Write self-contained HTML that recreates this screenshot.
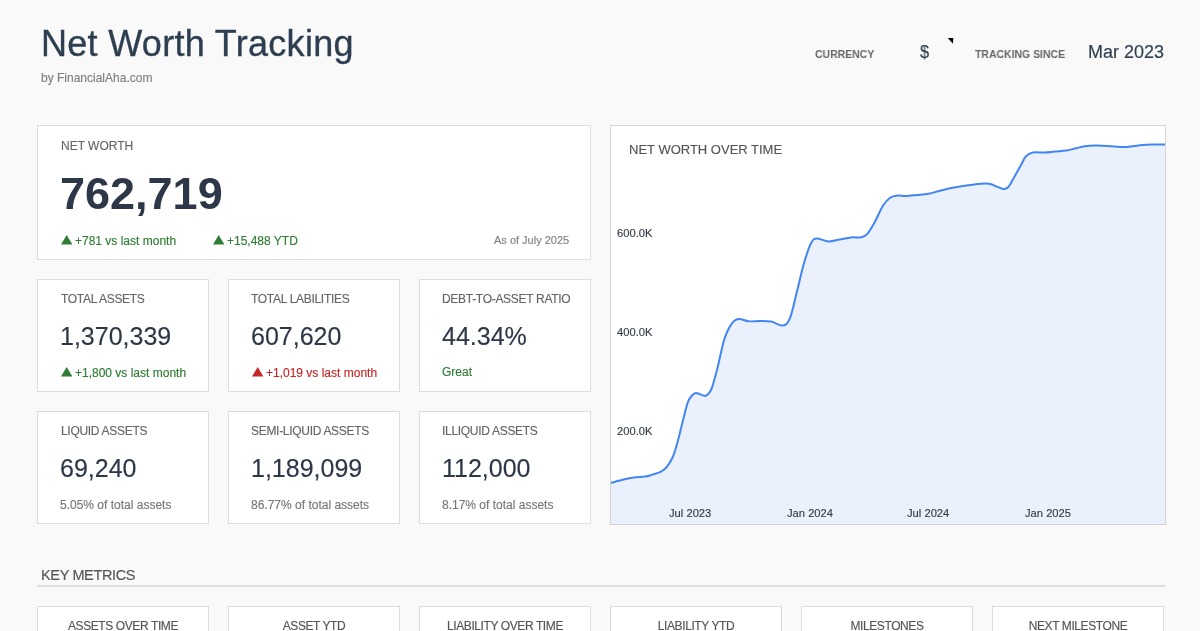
<!DOCTYPE html>
<html><head><meta charset="utf-8">
<style>
*{box-sizing:border-box;margin:0;padding:0}
html,body{width:1200px;height:631px;overflow:hidden;background:#f9f9f9;font-family:"Liberation Sans",sans-serif}
.a{position:absolute;white-space:nowrap;will-change:transform;-webkit-text-stroke:0.15px currentColor}
.card{position:absolute;background:#fff;border:1px solid #dddddd}
.lbl{color:#666;font-size:12px;letter-spacing:-0.3px}
.big{color:#2d3748;font-size:25px}
.up{color:#2e7d32;font-size:12px}
.dn{color:#c62828;font-size:12px}
.sub{color:#777;font-size:12px}
.ax{font-size:11.2px;color:#333c48}
.km{will-change:transform;-webkit-text-stroke:0.15px currentColor;position:absolute;top:605.5px;width:172px;height:40px;background:#fff;border:1px solid #dddddd;text-align:center;color:#555;font-size:12px;letter-spacing:-0.4px;padding-top:12px}
</style></head><body>
<div class="a" style="left:41px;top:22.5px;font-size:36px;letter-spacing:0.3px;-webkit-text-stroke:0.35px currentColor;color:#2c3e50">Net Worth Tracking</div>
<div class="a" style="left:41px;top:71px;font-size:12px;color:#808080">by FinancialAha.com</div>

<div class="a" style="left:815px;top:47.8px;font-size:11.2px;font-weight:bold;-webkit-text-stroke:0;transform:scaleX(0.934);transform-origin:0 0;color:#666">CURRENCY</div>
<div class="a" style="left:920px;top:41px;font-size:18.5px;transform:scaleX(0.88);transform-origin:0 0;color:#2c3e50">$</div>
<svg class="a" style="left:947px;top:38px" width="7" height="6"><path d="M0.7 0.1 L6.3 0.1 L6 5.7 Z" fill="#000"/></svg>
<div class="a" style="left:975px;top:47.8px;font-size:11.2px;font-weight:bold;-webkit-text-stroke:0;transform:scaleX(0.934);transform-origin:0 0;color:#666">TRACKING SINCE</div>
<div class="a" style="left:1088px;top:42px;font-size:18px;color:#2c3e50">Mar 2023</div>

<!-- net worth card -->
<div class="card" style="left:37px;top:125px;width:554px;height:135px"></div>
<div class="a lbl" style="left:61px;top:139px;letter-spacing:0">NET WORTH</div>
<div class="a" style="left:60px;top:168px;font-size:45px;font-weight:bold;-webkit-text-stroke:0;color:#2d3748">762,719</div>
<svg class="a" style="left:60.7px;top:235.3px" width="12" height="10"><path d="M0 9.4L5.7 0L11.4 9.4Z" fill="#2e7d32"/></svg><div class="a up" style="left:75px;top:234px">+781 vs last month</div>
<svg class="a" style="left:212.8px;top:235.3px" width="12" height="10"><path d="M0 9.4L5.7 0L11.4 9.4Z" fill="#2e7d32"/></svg><div class="a up" style="left:227px;top:234px">+15,488 YTD</div>
<div class="a sub" style="left:494px;top:234px;font-size:11px;color:#808080">As of July 2025</div>

<!-- row 1 -->
<div class="card" style="left:37px;top:279px;width:172px;height:113px"></div>
<div class="a lbl" style="left:61px;top:292px">TOTAL ASSETS</div>
<div class="a big" style="left:60px;top:322px">1,370,339</div>
<svg class="a" style="left:60.8px;top:367.2px" width="12" height="10"><path d="M0 9.4L5.7 0L11.4 9.4Z" fill="#2e7d32"/></svg><div class="a up" style="left:75px;top:366px">+1,800 vs last month</div>

<div class="card" style="left:228px;top:279px;width:172px;height:113px"></div>
<div class="a lbl" style="left:251px;top:292px">TOTAL LABILITIES</div>
<div class="a big" style="left:251px;top:322px">607,620</div>
<svg class="a" style="left:251.8px;top:367.2px" width="12" height="10"><path d="M0 9.4L5.7 0L11.4 9.4Z" fill="#c62828"/></svg><div class="a dn" style="left:266px;top:366px">+1,019 vs last month</div>

<div class="card" style="left:419px;top:279px;width:172px;height:113px"></div>
<div class="a lbl" style="left:442px;top:292px">DEBT-TO-ASSET RATIO</div>
<div class="a big" style="left:442px;top:322px">44.34%</div>
<div class="a up" style="left:442px;top:365px">Great</div>

<!-- row 2 -->
<div class="card" style="left:37px;top:411px;width:172px;height:113px"></div>
<div class="a lbl" style="left:61px;top:424px">LIQUID ASSETS</div>
<div class="a big" style="left:60px;top:454px">69,240</div>
<div class="a sub" style="left:60px;top:498px">5.05% of total assets</div>

<div class="card" style="left:228px;top:411px;width:172px;height:113px"></div>
<div class="a lbl" style="left:251px;top:424px">SEMI-LIQUID ASSETS</div>
<div class="a big" style="left:251px;top:454px">1,189,099</div>
<div class="a sub" style="left:251px;top:498px">86.77% of total assets</div>

<div class="card" style="left:419px;top:411px;width:172px;height:113px"></div>
<div class="a lbl" style="left:442px;top:424px">ILLIQUID ASSETS</div>
<div class="a big" style="left:442px;top:454px">112,000</div>
<div class="a sub" style="left:442px;top:498px">8.17% of total assets</div>

<!-- chart -->
<div class="card" style="left:610px;top:125px;width:556px;height:400px;border-color:#d4d4d4;overflow:hidden">
<svg id="chart" width="556" height="400" style="position:absolute;left:-1px;top:-1px">
<path id="fill" fill="#eaf1fd" d="M-5.00 359.46 C-3.97 359.19 -1.88 358.63 1.20 357.80 C4.28 356.97 9.73 355.38 13.50 354.50 C17.27 353.62 20.20 352.98 23.80 352.50 C27.40 352.02 32.00 352.08 35.10 351.60 C38.20 351.12 39.82 350.38 42.40 349.60 C44.98 348.82 48.20 348.20 50.60 346.90 C53.00 345.60 54.73 344.37 56.80 341.80 C58.87 339.23 61.12 335.97 63.00 331.50 C64.88 327.03 66.40 321.18 68.10 315.00 C69.80 308.82 71.48 300.92 73.20 294.40 C74.92 287.88 76.50 280.25 78.40 275.90 C80.30 271.55 82.72 269.43 84.60 268.30 C86.48 267.17 87.88 268.68 89.70 269.10 C91.52 269.52 93.58 271.57 95.50 270.80 C97.42 270.03 99.27 268.88 101.20 264.50 C103.13 260.12 104.93 252.78 107.10 244.50 C109.27 236.22 111.82 222.37 114.20 214.80 C116.58 207.23 119.02 202.57 121.40 199.10 C123.78 195.63 125.65 194.47 128.50 194.00 C131.35 193.53 134.93 195.97 138.50 196.30 C142.07 196.63 146.10 195.95 149.90 196.00 C153.70 196.05 157.50 195.85 161.30 196.60 C165.10 197.35 169.60 201.03 172.70 200.50 C175.80 199.97 177.52 199.10 179.90 193.40 C182.28 187.70 184.63 175.57 187.00 166.30 C189.37 157.03 191.72 145.88 194.10 137.80 C196.48 129.72 199.15 121.85 201.30 117.80 C203.45 113.75 204.15 113.73 207.00 113.50 C209.85 113.27 214.60 116.25 218.40 116.40 C222.20 116.55 226.00 115.07 229.80 114.40 C233.60 113.73 237.58 112.77 241.20 112.40 C244.82 112.03 248.77 112.83 251.50 112.20 C254.23 111.57 255.32 111.27 257.60 108.60 C259.88 105.93 262.67 100.80 265.20 96.20 C267.73 91.60 270.27 84.95 272.80 81.00 C275.33 77.05 277.87 74.23 280.40 72.50 C282.93 70.77 285.47 70.83 288.00 70.60 C290.53 70.37 292.43 71.20 295.60 71.10 C298.77 71.00 303.20 70.40 307.00 70.00 C310.80 69.60 314.60 69.40 318.40 68.70 C322.20 68.00 326.00 66.75 329.80 65.80 C333.60 64.85 337.40 63.78 341.20 63.00 C345.00 62.22 348.80 61.67 352.60 61.10 C356.40 60.53 360.18 60.02 364.00 59.60 C367.82 59.18 372.63 58.67 375.50 58.60 C378.37 58.53 379.30 58.70 381.20 59.20 C383.10 59.70 384.85 60.82 386.90 61.60 C388.95 62.38 391.60 63.83 393.50 63.90 C395.40 63.97 396.55 63.90 398.30 62.00 C400.05 60.10 401.88 56.17 404.00 52.50 C406.12 48.83 409.00 43.53 411.00 40.00 C413.00 36.47 414.05 33.37 416.00 31.30 C417.95 29.23 419.53 28.23 422.70 27.60 C425.87 26.97 431.28 27.68 435.00 27.50 C438.72 27.32 441.45 26.82 445.00 26.50 C448.55 26.18 452.97 26.10 456.30 25.60 C459.63 25.10 461.88 24.22 465.00 23.50 C468.12 22.78 471.67 21.78 475.00 21.30 C478.33 20.82 481.25 20.67 485.00 20.60 C488.75 20.53 494.17 20.73 497.50 20.90 C500.83 21.07 502.28 21.40 505.00 21.60 C507.72 21.80 510.88 22.15 513.80 22.10 C516.72 22.05 519.38 21.65 522.50 21.30 C525.62 20.95 529.17 20.30 532.50 20.00 C535.83 19.70 538.58 19.58 542.50 19.50 C546.42 19.42 553.75 19.50 556.00 19.50 L556.00 420 L-5.00 420 Z"/>
<path id="line" fill="none" stroke="#4285f4" stroke-width="2" d="M-5.00 359.46 C-3.97 359.19 -1.88 358.63 1.20 357.80 C4.28 356.97 9.73 355.38 13.50 354.50 C17.27 353.62 20.20 352.98 23.80 352.50 C27.40 352.02 32.00 352.08 35.10 351.60 C38.20 351.12 39.82 350.38 42.40 349.60 C44.98 348.82 48.20 348.20 50.60 346.90 C53.00 345.60 54.73 344.37 56.80 341.80 C58.87 339.23 61.12 335.97 63.00 331.50 C64.88 327.03 66.40 321.18 68.10 315.00 C69.80 308.82 71.48 300.92 73.20 294.40 C74.92 287.88 76.50 280.25 78.40 275.90 C80.30 271.55 82.72 269.43 84.60 268.30 C86.48 267.17 87.88 268.68 89.70 269.10 C91.52 269.52 93.58 271.57 95.50 270.80 C97.42 270.03 99.27 268.88 101.20 264.50 C103.13 260.12 104.93 252.78 107.10 244.50 C109.27 236.22 111.82 222.37 114.20 214.80 C116.58 207.23 119.02 202.57 121.40 199.10 C123.78 195.63 125.65 194.47 128.50 194.00 C131.35 193.53 134.93 195.97 138.50 196.30 C142.07 196.63 146.10 195.95 149.90 196.00 C153.70 196.05 157.50 195.85 161.30 196.60 C165.10 197.35 169.60 201.03 172.70 200.50 C175.80 199.97 177.52 199.10 179.90 193.40 C182.28 187.70 184.63 175.57 187.00 166.30 C189.37 157.03 191.72 145.88 194.10 137.80 C196.48 129.72 199.15 121.85 201.30 117.80 C203.45 113.75 204.15 113.73 207.00 113.50 C209.85 113.27 214.60 116.25 218.40 116.40 C222.20 116.55 226.00 115.07 229.80 114.40 C233.60 113.73 237.58 112.77 241.20 112.40 C244.82 112.03 248.77 112.83 251.50 112.20 C254.23 111.57 255.32 111.27 257.60 108.60 C259.88 105.93 262.67 100.80 265.20 96.20 C267.73 91.60 270.27 84.95 272.80 81.00 C275.33 77.05 277.87 74.23 280.40 72.50 C282.93 70.77 285.47 70.83 288.00 70.60 C290.53 70.37 292.43 71.20 295.60 71.10 C298.77 71.00 303.20 70.40 307.00 70.00 C310.80 69.60 314.60 69.40 318.40 68.70 C322.20 68.00 326.00 66.75 329.80 65.80 C333.60 64.85 337.40 63.78 341.20 63.00 C345.00 62.22 348.80 61.67 352.60 61.10 C356.40 60.53 360.18 60.02 364.00 59.60 C367.82 59.18 372.63 58.67 375.50 58.60 C378.37 58.53 379.30 58.70 381.20 59.20 C383.10 59.70 384.85 60.82 386.90 61.60 C388.95 62.38 391.60 63.83 393.50 63.90 C395.40 63.97 396.55 63.90 398.30 62.00 C400.05 60.10 401.88 56.17 404.00 52.50 C406.12 48.83 409.00 43.53 411.00 40.00 C413.00 36.47 414.05 33.37 416.00 31.30 C417.95 29.23 419.53 28.23 422.70 27.60 C425.87 26.97 431.28 27.68 435.00 27.50 C438.72 27.32 441.45 26.82 445.00 26.50 C448.55 26.18 452.97 26.10 456.30 25.60 C459.63 25.10 461.88 24.22 465.00 23.50 C468.12 22.78 471.67 21.78 475.00 21.30 C478.33 20.82 481.25 20.67 485.00 20.60 C488.75 20.53 494.17 20.73 497.50 20.90 C500.83 21.07 502.28 21.40 505.00 21.60 C507.72 21.80 510.88 22.15 513.80 22.10 C516.72 22.05 519.38 21.65 522.50 21.30 C525.62 20.95 529.17 20.30 532.50 20.00 C535.83 19.70 538.58 19.58 542.50 19.50 C546.42 19.42 553.75 19.50 556.00 19.50"/>
</svg>
</div>
<div class="a" style="left:629px;top:141.5px;font-size:13px;color:#555">NET WORTH OVER TIME</div>
<div class="a ax" style="left:617px;top:226.5px">600.0K</div>
<div class="a ax" style="left:617px;top:325.5px">400.0K</div>
<div class="a ax" style="left:617px;top:424.5px">200.0K</div>
<div class="a ax" style="left:669px;top:507px">Jul 2023</div>
<div class="a ax" style="left:787px;top:507px">Jan 2024</div>
<div class="a ax" style="left:907px;top:507px">Jul 2024</div>
<div class="a ax" style="left:1025px;top:507px">Jan 2025</div>

<!-- key metrics -->
<div class="a" style="left:41px;top:566.5px;font-size:14.5px;letter-spacing:-0.35px;color:#555">KEY METRICS</div>
<div class="a" style="left:37px;top:585px;width:1128px;height:2px;background:#e0e0e0"></div>
<div class="km" style="left:37px">ASSETS OVER TIME</div>
<div class="km" style="left:228px">ASSET YTD</div>
<div class="km" style="left:419px">LIABILITY OVER TIME</div>
<div class="km" style="left:610px">LIABILITY YTD</div>
<div class="km" style="left:801px">MILESTONES</div>
<div class="km" style="left:992px">NEXT MILESTONE</div>
</body></html>
